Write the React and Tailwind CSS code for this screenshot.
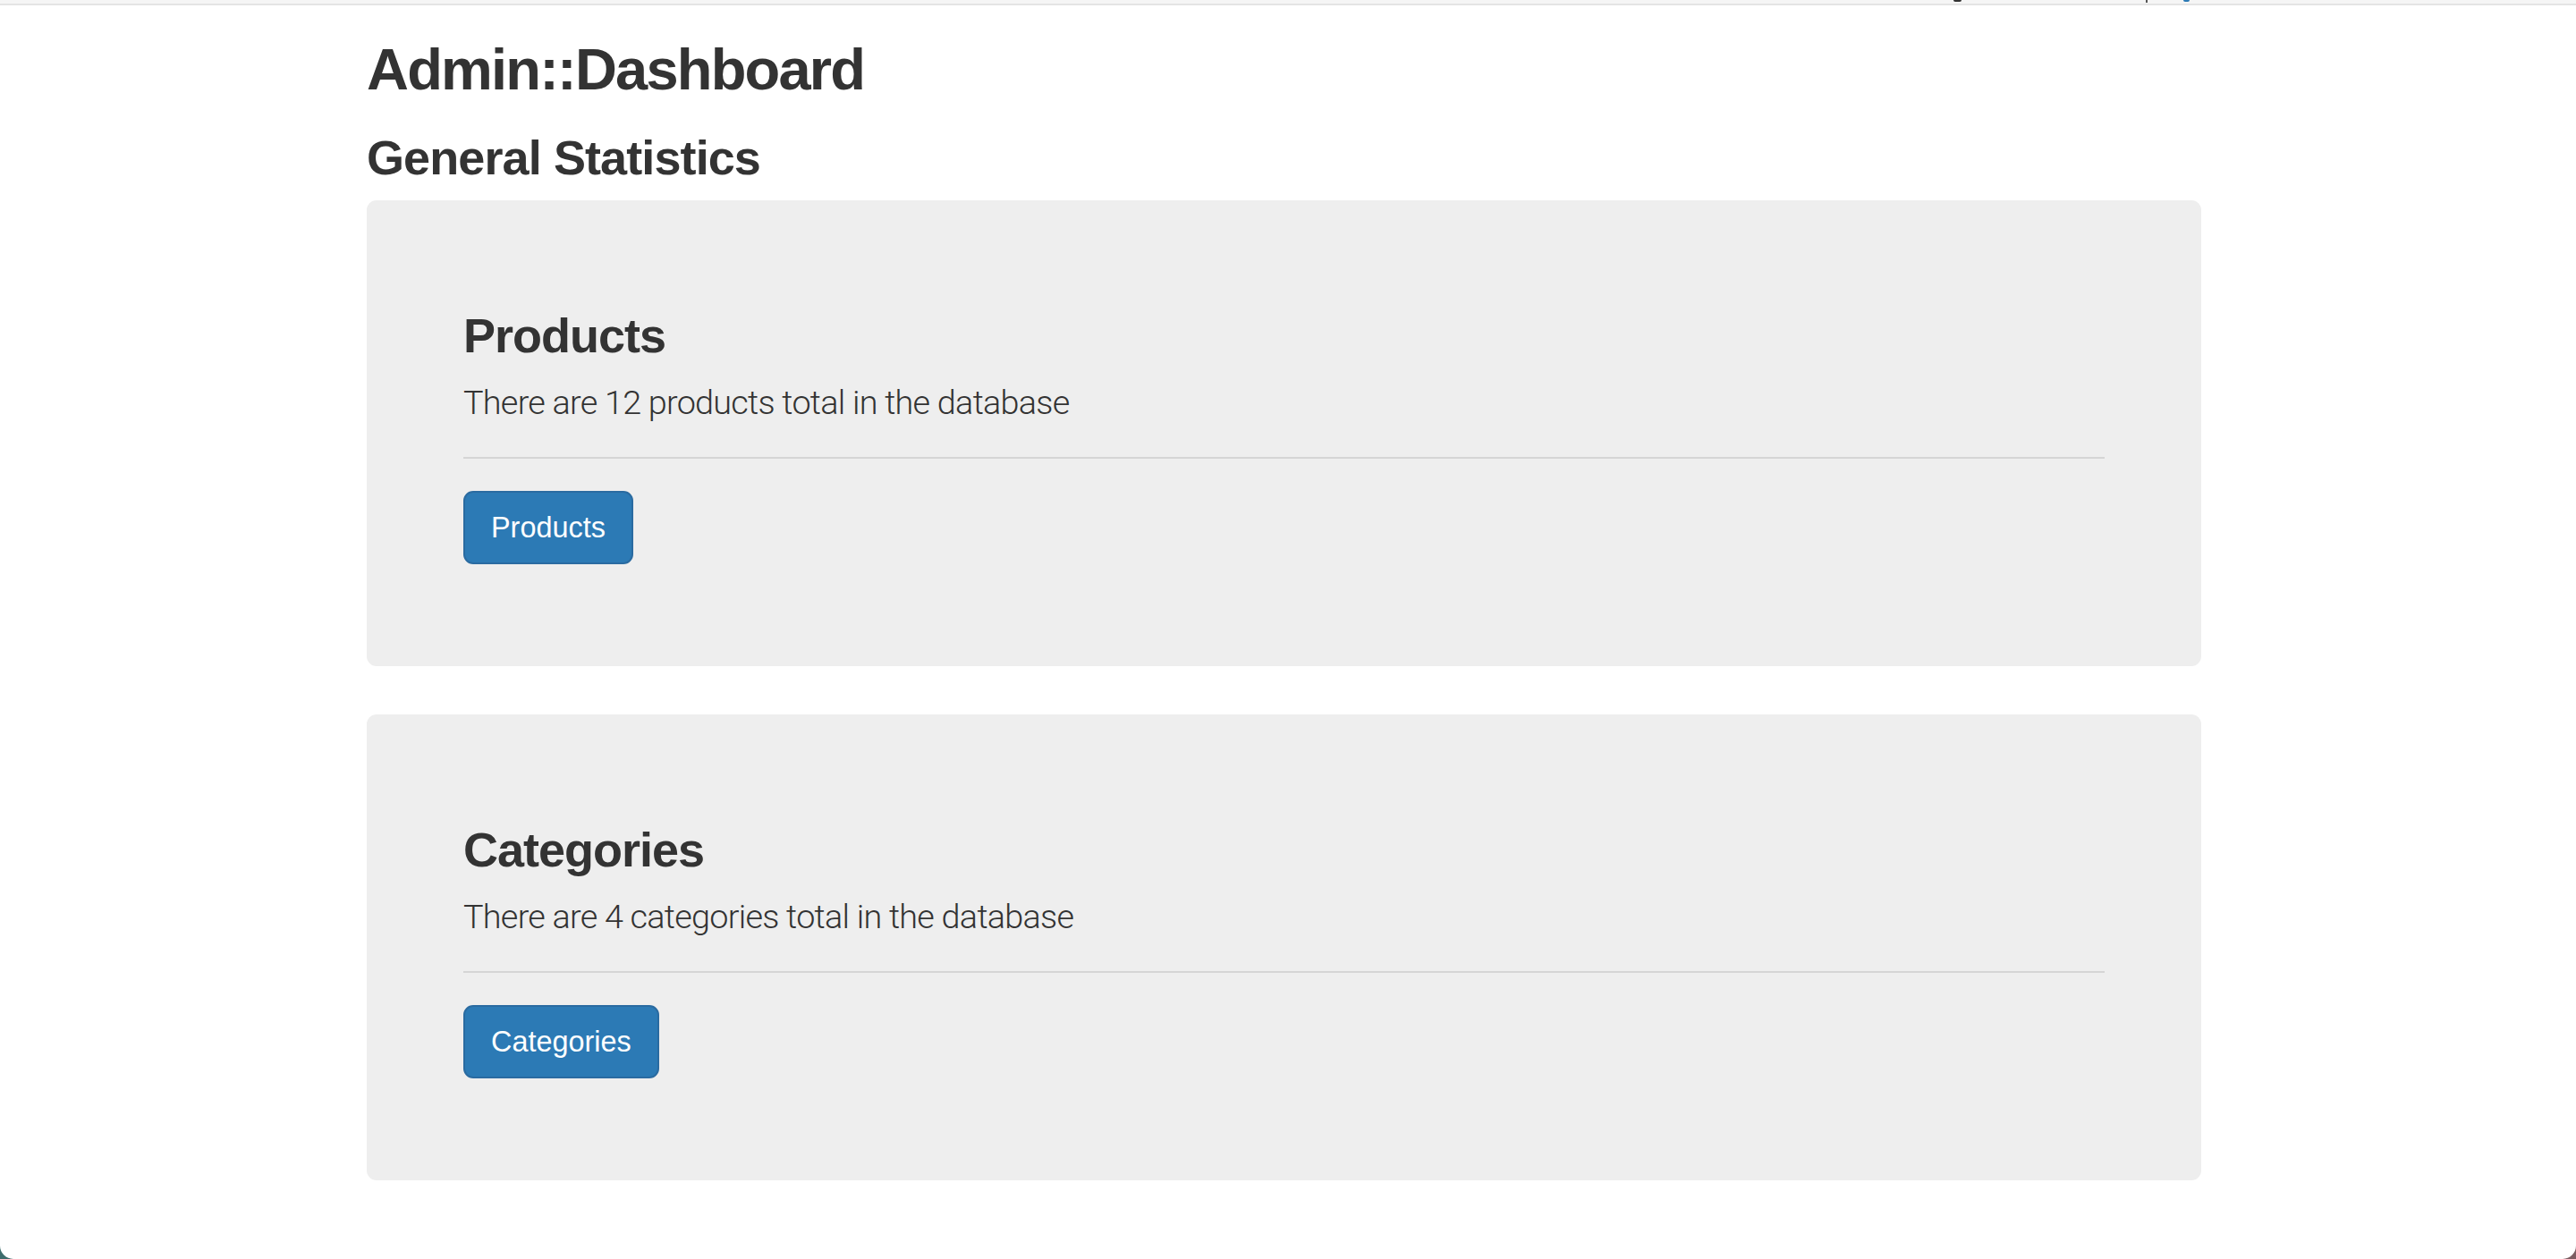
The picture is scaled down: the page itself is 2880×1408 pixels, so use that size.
const stats = [
  { title: "Products", text: "There are 12 products total in the database", button: "Products" },
  { title: "Categories", text: "There are 4 categories total in the database", button: "Categories" },
];

const StatCard = ({ title, text, button }) => (
  <div className="bg-[#eeeeee] rounded-[11px] px-[108px] pt-[86px] pb-[114px]">
    <h2 className="mt-[36px] mb-[18px] text-[54px] leading-[59px] font-bold tracking-[-1px] text-[#333333]">
      {title}
    </h2>
    <p className="text-[37.8px] leading-[54px] font-light text-[#333333] font-['Roboto',sans-serif] tracking-[-0.75px]">
      {text}
    </p>
    <hr className="mt-[34px] mb-[36px] border-0 border-t-2 border-[#d5d5d5]" />
    <div>
      <button className="h-[82px] px-[29px] bg-[#2c7ab5] border-2 border-[#2a6ba1] rounded-[11px] text-[32.4px] leading-[43px] text-white">
        {button}
      </button>
    </div>
  </div>
);

export default function App() {
  return (
    <div className="h-[1408px] bg-gradient-to-r from-[#3e6c6c] to-[#7d5d62]">
      <div className="h-[1408px] bg-white rounded-b-[15px] font-['Liberation_Sans',Arial,sans-serif] text-[#333333]">
        {/* navbar, mostly scrolled out of view */}
        <div className="relative h-[6px] bg-[#f5f5f5] border-b-2 border-[#e4e4e4]">
          <span className="absolute left-[2184px] top-0 w-[9px] h-[2px] bg-[#333333] rounded-b-full" />
          <span className="absolute left-[2399px] top-0 w-[2px] h-[3px] bg-[#555555]" />
          <span className="absolute left-[2441px] top-0 w-[7px] h-[2px] bg-[#2c7ab5] rounded-b-full" />
        </div>

        <div className="ml-[410px] w-[2051px]">
          <h1 className="mt-[36px] text-[65px] leading-[71px] font-bold tracking-[-1.8px]">
            Admin::Dashboard
          </h1>
          <h2 className="mt-[34px] mb-[18px] text-[54px] leading-[59px] font-bold tracking-[-0.9px]">
            General Statistics
          </h2>
          <div className="flex flex-col gap-[54px]">
            {stats.map((s) => (
              <StatCard key={s.title} {...s} />
            ))}
          </div>
        </div>
      </div>
    </div>
  );
}
